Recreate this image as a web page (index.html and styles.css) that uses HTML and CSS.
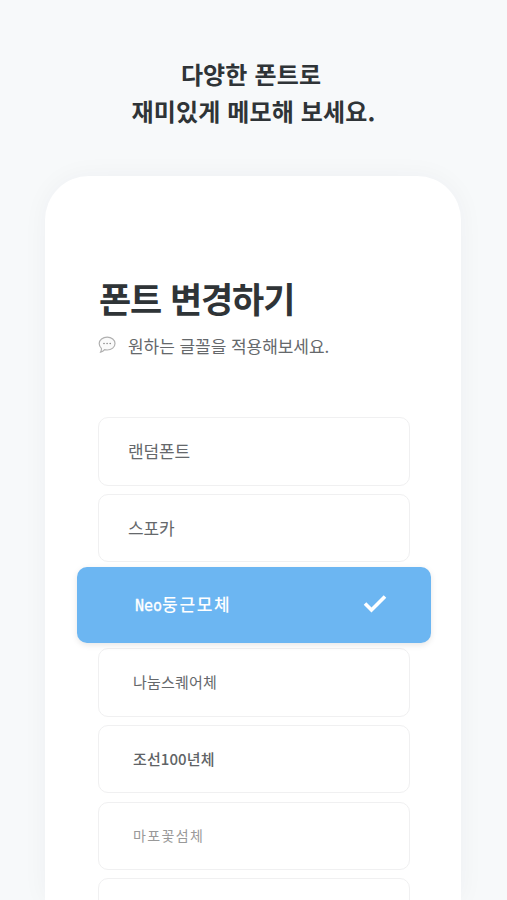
FILE: index.html
```html
<!DOCTYPE html>
<html lang="ko">
<head>
<meta charset="utf-8">
<title>폰트 변경하기</title>
<link rel="stylesheet" href="styles.css">
</head>
<body>
<header class="headline"><span class="lead">다양한 폰트로</span><br>재미있게 메모해 보세요.</header>
<main class="sheet">
  <h1 class="title">폰트 변경하기</h1>
  <p class="hint">
    <svg class="bubble" viewBox="0 0 18 18"><path d="M9.200 1.200c4.400 0 7.800 2.800 7.800 6.400s-3.400 6.400-7.800 6.400l-2.600-.3c-1 1.300-2.400 2.200-4 2.500 .7-1.200 1.100-2.400 .8-3.800C2 11.200 1.200 9.600 1.200 7.600 1.200 4 4.800 1.200 9.200 1.200z" fill="#fafafa" stroke="#b0b0b0" stroke-width="1.200"/><g fill="#888"><circle cx="6" cy="7.500" r=".8"/><circle cx="9.100" cy="7.500" r=".8"/><circle cx="12.200" cy="7.500" r=".8"/></g></svg>
    <span>원하는 글꼴을 적용해보세요.</span>
  </p>
  <ul class="fonts">
    <li class="font"><span class="name">랜덤폰트</span></li>
    <li class="font"><span class="name">스포카</span></li>
    <li class="font selected"><span class="name neo"><span class="latin">Neo</span>둥근모체</span>
      <svg class="check" viewBox="0 0 24 20"><path d="M2 9.500l6.500 6.500L22 2.500" fill="none" stroke="#fff" stroke-width="3.600"/></svg></li>
    <li class="font"><span class="name square">나눔스퀘어체</span></li>
    <li class="font"><span class="name chosun">조선100년체</span></li>
    <li class="font"><span class="name mapo">마포꽃섬체</span></li>
    <li class="font"></li>
  </ul>
</main>
</body>
</html>
```
FILE: styles.css
```css
* { box-sizing: border-box; }
html, body { height: 100%; margin: 0; overflow: hidden; }
body {
  background: #f7f9fa;
  color: #2f3437;
  font-family: "Noto Sans CJK KR", sans-serif;
}
.headline {
  height: 176px;
  padding-top: 55px;
  text-align: center;
  font-size: 24px;
  line-height: 37px;
  font-weight: 700;
  letter-spacing: .15px;
}
.lead { margin-right: 5px; }
.sheet {
  width: 416px;
  height: 724px;
  margin-left: 45px;
  padding: 96px 51px 0 53px;
  border-radius: 44px 44px 0 0;
  background: #fff;
  box-shadow: 0 0 26px rgba(40, 50, 60, .045);
  overflow: hidden;
}
.title {
  margin: -1px 0 0 1px;
  font-size: 35px;
  line-height: 54px;
  font-weight: 700;
  letter-spacing: -1.100px;
}
.hint {
  display: flex;
  align-items: center;
  gap: 12px;
  height: 30px;
  margin: 5px 0 0;
  color: #65686b;
  font-size: 17px;
  letter-spacing: -.05px;
}
.bubble { width: 18px; height: 18px; }
.fonts {
  display: flex;
  flex-direction: column;
  gap: 8.300px;
  margin: 57px 0 0;
  padding: 0;
  list-style: none;
}
.font {
  display: flex;
  align-items: center;
  flex: none;
  height: 68.500px;
  padding: 0 0 2px 29px;
  border: 1px solid #f0f0f1;
  border-radius: 10px;
  background: #fff;
  color: #65686b;
  font-size: 17px;
  letter-spacing: -.1px;
}
.selected {
  z-index: 1;
  justify-content: space-between;
  height: 76.500px;
  margin: -4px -21px -3.400px;
  padding: 0 44px 2px 58px;
  border: 0;
  background: #6cb6f2;
  color: #fff;
  box-shadow: 0 2px 6px rgba(0, 0, 0, .1);
}
.check { width: 24px; height: 20px; }
.name { white-space: nowrap; }
.neo { font-size: 17px; font-weight: 500; letter-spacing: 1.700px; }
.latin {
  font-family: "DejaVu Sans Mono", monospace;
  font-size: 15px;
  font-weight: 400;
  letter-spacing: 0;
  -webkit-text-stroke: .3px #fff;
}
.square, .chosun, .mapo { margin-left: 5px; }
.square { font-size: 15px; letter-spacing: .2px; }
.chosun { padding-top: 1px; font-size: 15px; font-weight: 500; letter-spacing: .1px; color: #606366; }
.mapo { padding-top: 1px; font-family: "Liberation Serif", "Noto Sans CJK KR", serif; font-size: 14px; letter-spacing: 1.400px; color: #999; }
```
